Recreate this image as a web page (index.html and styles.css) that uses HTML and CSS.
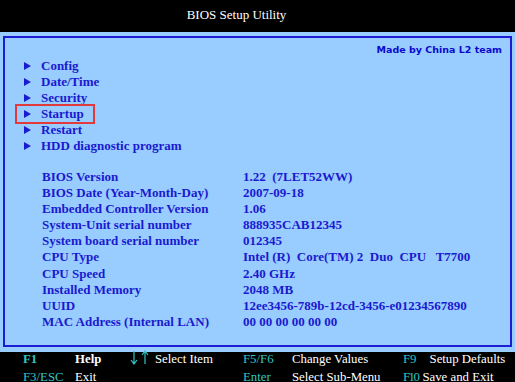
FILE: index.html
```html
<!DOCTYPE html>
<html>
<head lang="en">
    <meta charset="UTF-8">
    <title>BIOS Setup Utility</title>
    <link rel="stylesheet" href="styles.css">
</head>
<body>
<div id="screen">
    <div class="title">BIOS Setup Utility</div>
    <div class="main">
        <div class="panel">
            <div class="credit">Made by China L2 team</div>
            <ul class="menu">
                <li><span class="arrow"></span>Config</li>
                <li><span class="arrow"></span>Date/Time</li>
                <li><span class="arrow"></span>Security</li>
                <li class="current"><span class="arrow"></span>Startup</li>
                <li><span class="arrow"></span>Restart</li>
                <li><span class="arrow"></span>HDD diagnostic program</li>
            </ul>
            <dl class="info">
                <dt>BIOS Version</dt><dd>1.22&nbsp; (7LET52WW)</dd>
                <dt>BIOS Date (Year-Month-Day)</dt><dd>2007-09-18</dd>
                <dt>Embedded Controller Version</dt><dd>1.06</dd>
                <dt>System-Unit serial number</dt><dd>888935CAB12345</dd>
                <dt>System board serial number</dt><dd>012345</dd>
                <dt>CPU Type</dt><dd>Intel (R)&nbsp; Core(TM) 2&nbsp; Duo&nbsp; CPU&nbsp;&nbsp; T7700</dd>
                <dt>CPU Speed</dt><dd>2.40 GHz</dd>
                <dt>Installed Memory</dt><dd>2048 MB</dd>
                <dt>UUID</dt><dd>12ee3456-789b-12cd-3456-e01234567890</dd>
                <dt>MAC Address (Internal LAN)</dt><dd>00 00 00 00 00 00</dd>
            </dl>
        </div>
    </div>
    <div class="keys">
        <span class="key bold">F1</span>
        <span class="bold">Help</span>
        <span>
            <svg class="updown" width="20" height="15" viewBox="0 0 20 15">
                <path d="M4 1V13M1 10L4 14L7 10" fill="none" stroke="#33c4c4" stroke-width="1.2"/>
                <path d="M15 14V2M12 5L15 1L18 5" fill="none" stroke="#33c4c4" stroke-width="1.2"/>
            </svg>Select Item
        </span>
        <span class="key">F5/F6</span>
        <span>Change Values</span>
        <span><span class="key k9">F9</span>Setup Defaults</span>

        <span class="key r2">F3/ESC</span>
        <span class="r2">Exit</span>
        <span class="r2"></span>
        <span class="key r2">Enter</span>
        <span class="r2">Select Sub-Menu</span>
        <span class="r2"><span class="key k10">F10</span>Save and Exit</span>
    </div>
</div>
</body>
</html>
```
FILE: styles.css
```css
*{
    margin: 0;
    padding: 0;
}
li{
    list-style: none;
}
body{
    background: #000;
    font-family: "Liberation Serif", "Times New Roman", serif;
}
#screen{
    width: 515px;
    height: 382px;
    overflow: hidden;
}
.title{
    height: 32px;
    line-height: 30px;
    text-align: center;
    padding-right: 42px;
    color: #fff;
    font-size: 13px;
    box-sizing: border-box;
}
.main{
    height: 320px;
    background: #99ccff;
    padding: 4px 3px 5px 3px;
    box-sizing: border-box;
}
.panel{
    height: 100%;
    border: 2px solid #1c1cd4;
    color: #1a1ad0;
    font-weight: bold;
    font-size: 13px;
    box-sizing: border-box;
}
.credit{
    text-align: right;
    padding: 4px 8px 0 0;
    font-family: "DejaVu Sans", Verdana, sans-serif;
    font-size: 9.5px;
    line-height: 16px;
    color: #0a0acc;
}
.menu{
    padding-left: 12px;
}
.menu li{
    line-height: 16px;
    height: 16px;
    display: flex;
    align-items: center;
    width: 69px;
    padding-left: 7px;
    white-space: nowrap;
}
.menu .arrow{
    width: 0;
    height: 0;
    border-top: 4px solid transparent;
    border-bottom: 4px solid transparent;
    border-left: 7px solid #1a1ad0;
    margin-right: 10px;
}
.menu .current{
    outline: 2px solid #e23a3a;
}
.info{
    display: grid;
    grid-template-columns: 201px auto;
    padding: 15px 0 0 37px;
    line-height: 16.1px;
}
.info dd{
    white-space: nowrap;
}
.keys{
    height: 32px;
    display: grid;
    grid-template-columns: 52px 55px 113px 49px 111px auto;
    grid-template-rows: 18px 14px;
    padding: 0 0 0 23px;
    line-height: 18px;
    font-size: 12.8px;
    color: #fff;
    white-space: nowrap;
    margin-top: -2px;
}
.keys .r2{
    line-height: 10px;
    align-self: end;
}
.keys .key{
    color: #33c4c4;
}
.keys .bold{
    font-weight: bold;
}
.keys .updown{
    vertical-align: -2px;
    margin-right: 5px;
}
.keys .k9{
    margin-right: 13px;
}
.keys .k10{
    letter-spacing: -1.5px;
    margin-right: 4px;
}
```
